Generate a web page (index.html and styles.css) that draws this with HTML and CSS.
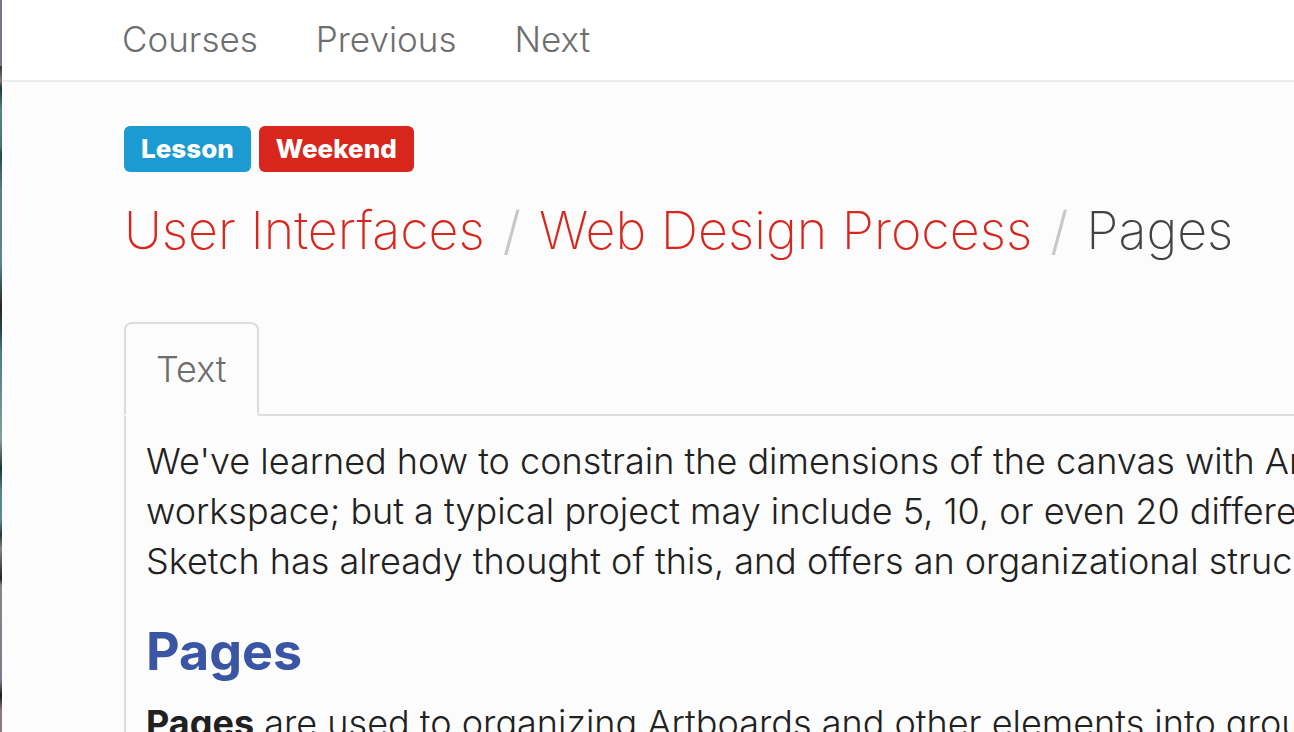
FILE: index.html
```html
<!DOCTYPE html>
<html lang="en">
<head>
<meta charset="utf-8">
<title>Pages</title>
<link rel="stylesheet" href="styles.css">
</head>
<body>
<div class="page">
  <div class="edge"></div>
  <div class="main">
    <nav class="topnav" aria-label="Lessons">
      <a href="#courses">Courses</a>
      <a href="#previous">Previous</a>
      <a href="#next">Next</a>
    </nav>
    <main class="content">
      <div class="badges">
        <span class="badge badge-info">Lesson</span>
        <span class="badge badge-danger">Weekend</span>
      </div>
      <h1 class="title">
        <a href="#ui">User Interfaces</a>
        <span class="slash">/</span>
        <a href="#process">Web Design Process</a>
        <span class="slash">/</span>
        <span>Pages</span>
      </h1>
      <div class="tabs" role="tablist">
        <button class="tab" type="button" role="tab" aria-selected="true">Text</button>
      </div>
      <article class="panel">
        <p>We've learned how to constrain the dimensions of the canvas with Ar<br>workspace; but a typical project may include 5, 10, or even 20 differe<br>Sketch has already thought of this, and offers an organizational struc</p>
        <h2>Pages</h2>
        <p><strong>Pages</strong> are used to organizing Artboards and other elements into grou</p>
      </article>
    </main>
  </div>
</div>
</body>
</html>
```
FILE: styles.css
```css
* { box-sizing: border-box; }
html, body { height: 100%; }
body {
  margin: 0;
  overflow: hidden;
  background: #fcfcfc;
  color: #212121;
  font-family: Inter, "Liberation Sans", sans-serif;
  font-size: 36px;
  font-weight: 300;
  line-height: 50px;
}
a { color: inherit; text-decoration: none; }
strong { font-weight: 700; }
.page {
  display: flex;
  height: 100%;
}
.edge {
  flex: none;
  width: 2px;
  background: linear-gradient(#74788f 0, #74788f 9%, #3c3438 9%, #857a80 11%, #1d3b3b 12%, #568583 15%, #487674 20%, #234b4b 21%, #5b7e86 26%, #5b8688 36%, #34585a 39%, #2a2526 42%, #234548 45%, #4d7c80 48%, #82a0a0 60%, #173436 64%, #568487 67%, #5c8c8e 71%, #223b3e 73%, #8b8287 75%, #241f24 79%, #8d838d 80%, #80788a 93%, #1d171d 95%, #8d7787 97%, #8d7787 100%);
}
.main {
  flex: 1;
  min-width: 0;
}
.topnav {
  display: flex;
  gap: 58px;
  height: 82px;
  padding: 14px 120px;
  border-bottom: 2px solid #ececec;
  background: #fff;
  color: #6e6e6e;
  font-size: 35px;
}
.content { padding: 44px 0 0 122px; }
.badges { display: flex; gap: 8px; }
.badge {
  height: 46px;
  padding: 0 17px;
  border-radius: 6px;
  color: #fff;
  font-size: 26px;
  font-weight: 800;
  line-height: 45px;
}
.badge-info { background: #1b9bd1; }
.badge-danger { background: #d9261c; }
.title {
  display: flex;
  gap: 18px;
  margin: 24px 0 56px;
  color: #424242;
  font-size: 52px;
  font-weight: 200;
  line-height: 70px;
  white-space: nowrap;
}
.title a { color: #d9261c; }
.title .slash { color: #c8c8c8; font-weight: 300; }
.tabs {
  display: flex;
  border-bottom: 2px solid #ddd;
}
.tab {
  height: 94px;
  margin-bottom: -2px;
  padding: 0 30px;
  border: 2px solid #ddd;
  border-bottom-color: #fcfcfc;
  border-radius: 8px 8px 0 0;
  background: #fcfcfc;
  color: #6e6e6e;
  font: inherit;
}
.panel {
  padding: 20px;
  border-left: 2px solid #ddd;
  white-space: nowrap;
}
.panel p { margin: 0; }
.panel h2 {
  margin: 34px 0 14px;
  color: #3955a3;
  font-size: 52px;
  font-weight: 700;
  line-height: 64px;
}
```
